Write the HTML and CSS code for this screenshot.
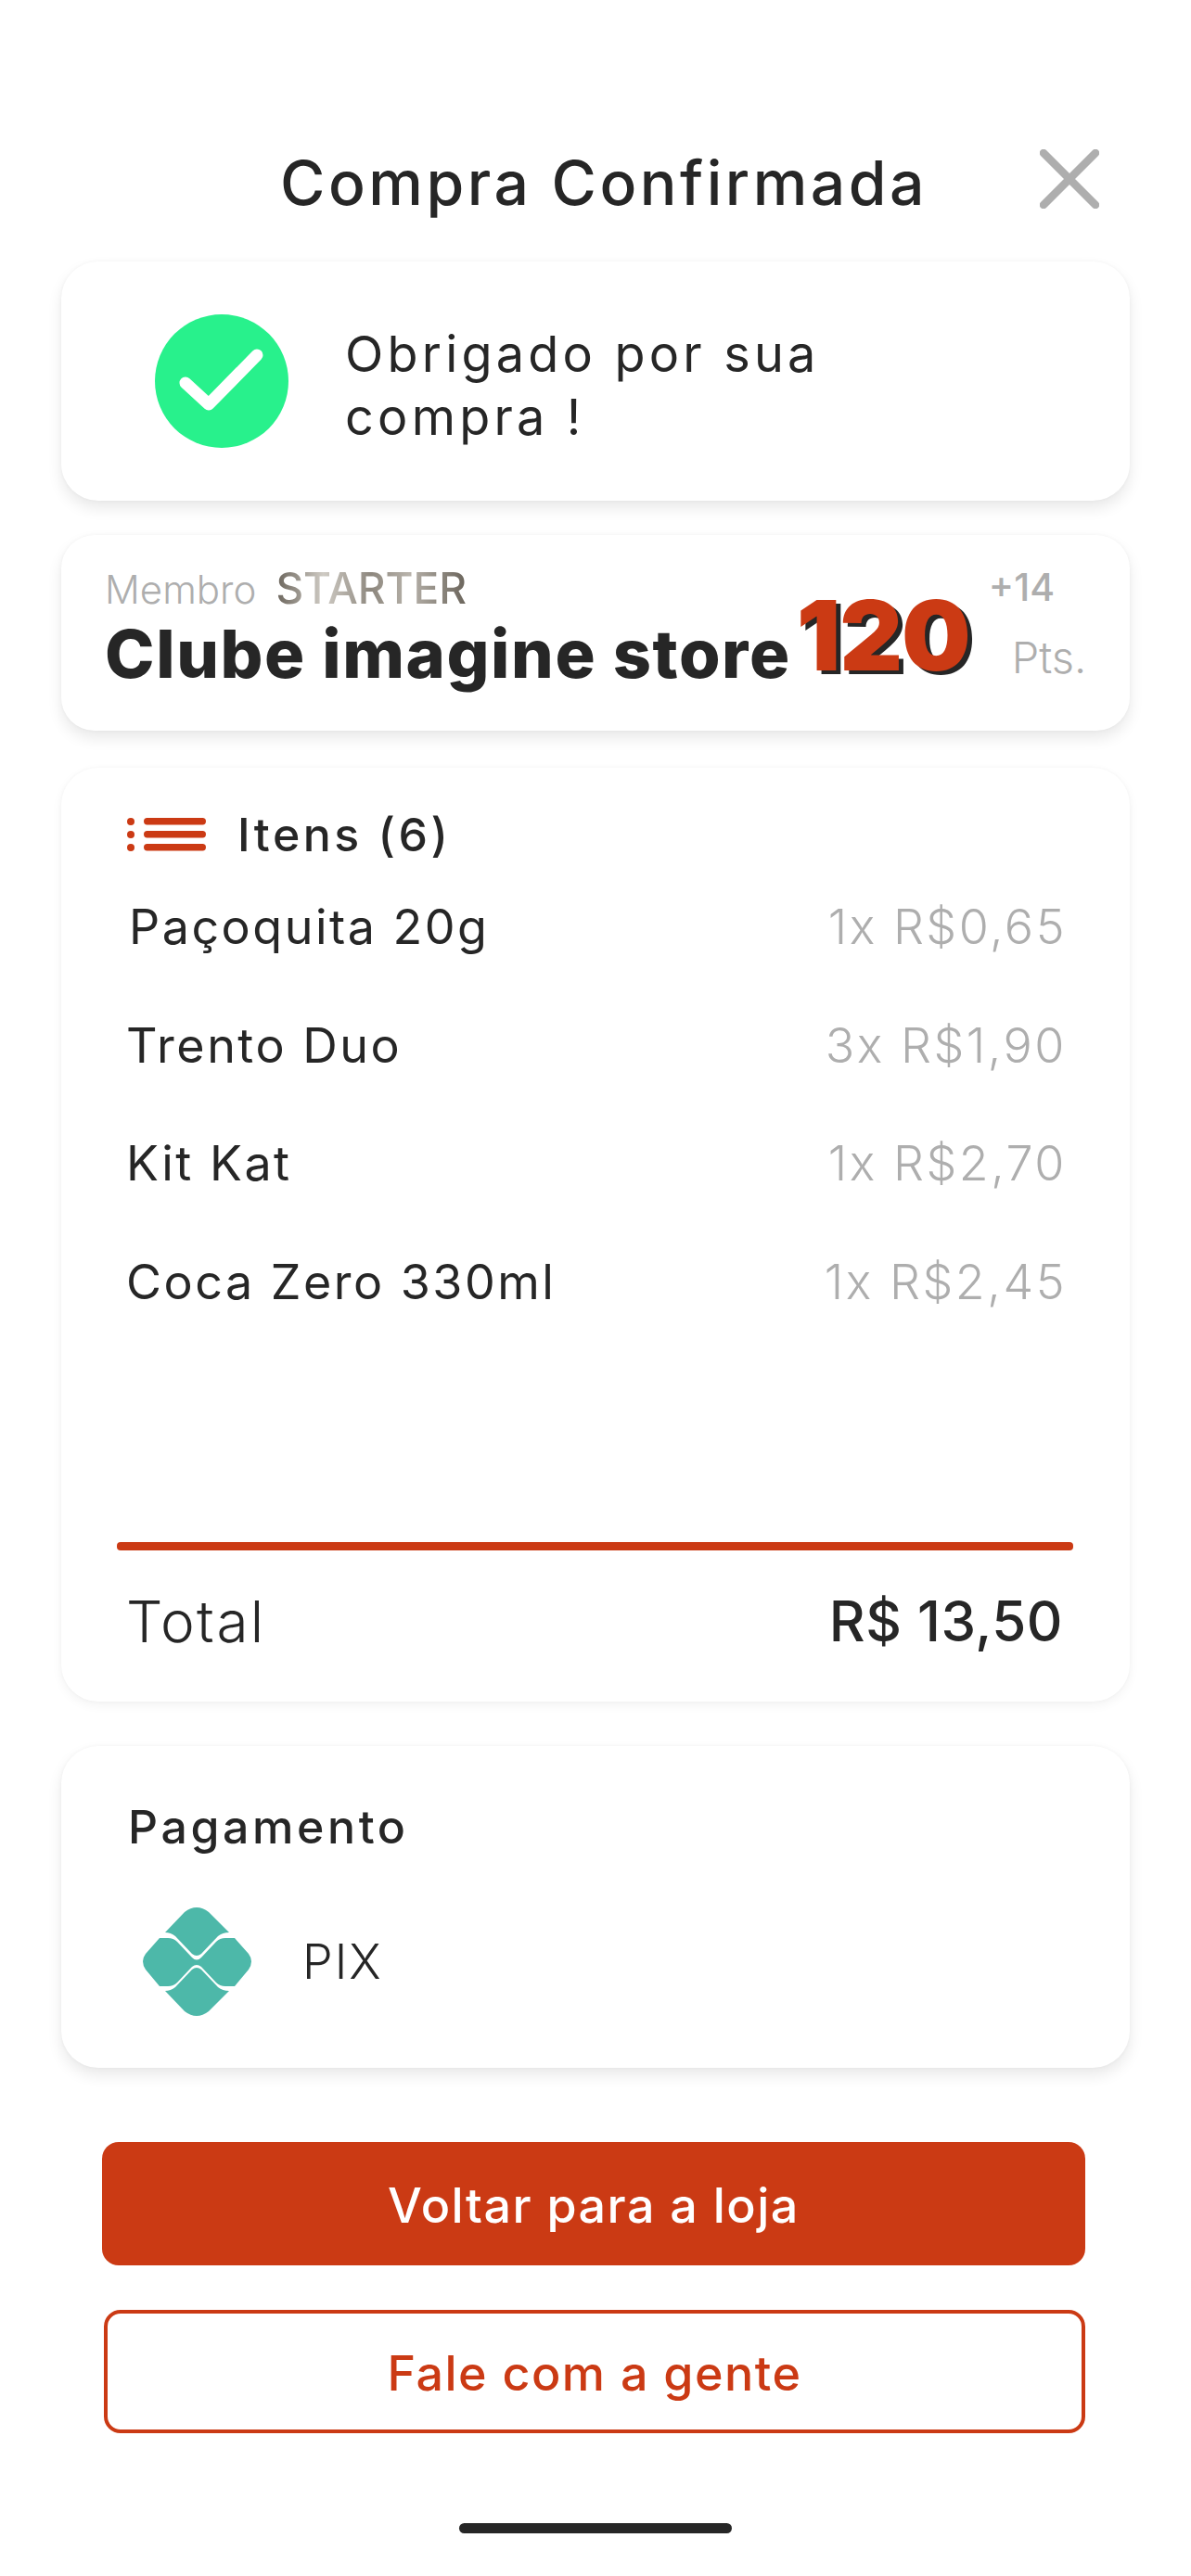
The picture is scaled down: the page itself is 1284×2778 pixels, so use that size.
FILE: index.html
```html
<!DOCTYPE html>
<html lang="pt-BR">
<head>
  <meta charset="UTF-8">
  <meta name="viewport" content="width=device-width, initial-scale=1.0">
  <title>Compra Confirmada</title>
  <link rel="stylesheet" href="styles.css">
</head>
<body>
  <header class="top-bar">
    <h1>Compra Confirmada</h1>
    <svg class="close-icon" width="64" height="64" viewBox="0 0 64 64">
      <path d="M4 4 60 60M60 4 4 60" fill="none" stroke="#aeaeae" stroke-width="8.5" stroke-linecap="round"/>
    </svg>
  </header>

  <section class="card thanks-card">
    <svg class="check-icon" width="144" height="144" viewBox="0 0 144 144">
      <circle cx="72" cy="72" r="72" fill="#28f18c"/>
      <path d="M33 74 58 97 110 44" fill="none" stroke="#fff" stroke-width="13" stroke-linecap="round" stroke-linejoin="round"/>
    </svg>
    <p>Obrigado por sua<br>compra !</p>
  </section>

  <section class="card club-card">
    <div class="club-text">
      <div class="member"><span class="member-label">Membro</span><span class="member-tier">STARTER</span></div>
      <div class="club-name">Clube imagine store</div>
    </div>
    <div class="points">120</div>
    <div class="points-side">
      <span class="points-plus">+14</span>
      <span class="points-unit">Pts.</span>
    </div>
  </section>

  <section class="card items-card">
    <div class="items-head">
      <svg width="86" height="36" viewBox="0 0 86 36">
        <g fill="#cb3a14">
          <circle cx="5" cy="4" r="4"/><circle cx="5" cy="18" r="4"/><circle cx="5" cy="32" r="4"/>
          <rect x="19" y="0" width="67" height="7.5" rx="3.7"/>
          <rect x="19" y="14" width="67" height="7.5" rx="3.7"/>
          <rect x="19" y="28" width="67" height="7.5" rx="3.7"/>
        </g>
      </svg>
      <span>Itens (6)</span>
    </div>
    <ul class="items-list">
      <li class="first-item"><span>Paçoquita 20g</span><span class="price">1x R$0,65</span></li>
      <li><span>Trento Duo</span><span class="price">3x R$1,90</span></li>
      <li><span>Kit Kat</span><span class="price">1x R$2,70</span></li>
      <li><span>Coca Zero 330ml</span><span class="price">1x R$2,45</span></li>
    </ul>
    <div class="items-line"></div>
    <div class="total-row">
      <span>Total</span>
      <strong>R$ 13,50</strong>
    </div>
  </section>

  <section class="card pay-card">
    <h2>Pagamento</h2>
    <div class="pay-method">
      <svg width="117" height="117" viewBox="0 0 117 117">
        <g fill="#4db8a9">
          <path d="M24 27 45 5Q58-5 71 5L93 27Q86 27 81 31L63 50Q58 54 53 50L35 31Q30 27 24 27Z"/>
          <path d="M24 90 45 112Q58 122 71 112L93 90Q86 90 81 86L63 67Q58 63 53 67L35 86Q30 90 24 90Z"/>
          <path d="M18 33H27Q33 33 37 37L53 54Q58 59 63 54L79 37Q83 33 89 33H99L114 50Q120 58 114 67L99 85H89Q83 85 79 81L63 64Q58 60 53 64L37 81Q33 85 27 85H18L3 67Q-3 58 3 50Z"/>
        </g>
      </svg>
      <span>PIX</span>
    </div>
  </section>

  <div class="actions">
    <a class="btn btn-solid">Voltar para a loja</a>
    <a class="btn btn-outline">Fale com a gente</a>
  </div>

  <div class="home-bar"></div>
</body>
</html>
```

FILE: styles.css
```css
*, *::before, *::after {
    box-sizing: border-box;
}
body {
    margin: 0;
    height: 2778px;
    overflow: hidden;
    background-color: #fff;
    color: #262626;
    font-family: 'Inter', 'Liberation Sans', sans-serif;
}
.top-bar {
    display: flex;
    align-items: flex-start;
    justify-content: space-between;
    height: 282px;
    padding: 161px 99px 0 302px;
}
h1 {
    margin: 2px 0 0;
    font-size: 66px;
    line-height: 68px;
    font-weight: 500;
    letter-spacing: 3.5px;
}
.card {
    width: 1152px;
    margin-left: 66px;
    background: #fff;
    border-radius: 40px;
    box-shadow: 0 8px 16px rgba(0, 0, 0, 0.09), 0 0 4px rgba(0, 0, 0, 0.04);
}
.thanks-card {
    display: flex;
    align-items: center;
    gap: 61px;
    height: 258px;
    padding-left: 101px;
}
.thanks-card p {
    margin: 10px 0 0;
    font-size: 54px;
    line-height: 68px;
    letter-spacing: 4.2px;
}
.club-card {
    display: flex;
    height: 211px;
    margin-top: 37px;
    padding: 34px 0 0 47px;
    border-radius: 36px;
}
.member {
    display: flex;
    align-items: baseline;
    gap: 21px;
    height: 46px;
}
.member-label {
    font-size: 42px;
    line-height: 46px;
    font-weight: 300;
    color: #aeaeae;
}
.member-tier {
    font-size: 46px;
    line-height: 46px;
    font-weight: 500;
    color: transparent;
    background: linear-gradient(to right, #6a645b, #cfcbc4 25%, #8d877e 50%, #b8b3ab 70%, #6a645b);
    -webkit-background-clip: text;
    background-clip: text;
}
.club-name {
    margin-top: 6px;
    font-size: 72px;
    line-height: 84px;
    font-weight: 800;
    letter-spacing: 1.6px;
    white-space: nowrap;
}
.points {
    margin: 18px 0 0 6px;
    font-size: 105px;
    line-height: 112px;
    font-weight: 900;
    letter-spacing: -1px;
    color: #cb3a14;
    text-shadow: 5px 4px 0 #262626;
}
.points-side {
    display: flex;
    flex-direction: column;
    align-items: flex-start;
    margin-left: 20px;
}
.points-plus {
    font-size: 41px;
    line-height: 44px;
    font-weight: 500;
    color: #aeaeae;
}
.points-unit {
    margin: 28px 0 0 25px;
    font-size: 47px;
    line-height: 52px;
    font-weight: 300;
    color: #aeaeae;
}
.items-card {
    height: 1007px;
    margin-top: 40px;
    padding: 42px 68px 0 70px;
    box-shadow: 0 4px 12px rgba(0, 0, 0, 0.05), 0 0 4px rgba(0, 0, 0, 0.03);
}
.items-head {
    display: flex;
    align-items: center;
    gap: 34px;
    height: 60px;
    font-size: 50px;
    font-weight: 500;
    letter-spacing: 3.5px;
}
.items-list {
    margin: 40px 0 0;
    padding: 0;
    list-style: none;
}
.items-list li {
    display: flex;
    justify-content: space-between;
    height: 127.5px;
    font-size: 52px;
    line-height: 60px;
    letter-spacing: 2.5px;
}
.first-item {
    padding: 0 0 0 3px;
}
.price {
    color: #aeaeae;
    font-weight: 300;
}
.items-line {
    width: 1031px;
    height: 9px;
    margin: 183px 0 0 -10px;
    border-radius: 4px;
    background: #cb3a14;
}
.total-row {
    display: flex;
    align-items: center;
    justify-content: space-between;
    height: 70px;
    margin: 41px 4px 0 0;
    font-size: 62px;
    font-weight: 300;
    letter-spacing: 2.4px;
}
.total-row strong {
    font-size: 60px;
    font-weight: 500;
    letter-spacing: 0.5px;
}
.pay-card {
    height: 347px;
    margin-top: 48px;
    padding: 57px 70px 0 72px;
}
h2 {
    margin: 0;
    font-size: 50px;
    line-height: 60px;
    font-weight: 500;
    letter-spacing: 3.6px;
}
.pay-method {
    display: flex;
    align-items: center;
    gap: 55px;
    margin: 57px 0 0 16px;
    font-size: 52px;
    font-weight: 300;
    letter-spacing: 2px;
}
.actions {
    display: flex;
    flex-direction: column;
    align-items: flex-end;
    gap: 48px;
    margin: 80px 0 0 110px;
    width: 1060px;
}
.btn {
    display: flex;
    align-items: center;
    justify-content: center;
    width: 100%;
    height: 133px;
    padding-top: 3px;
    border-radius: 18px;
    font-size: 52px;
    font-weight: 500;
    letter-spacing: 1.5px;
}
.btn-solid {
    background: #cb3a14;
    color: #fff;
}
.btn-outline {
    width: 1058px;
    border: 4px solid #cb3a14;
    color: #cb3a14;
}
.home-bar {
    width: 294px;
    height: 11px;
    margin: 97px 0 0 495px;
    border-radius: 6px;
    background: #262626;
}
```
